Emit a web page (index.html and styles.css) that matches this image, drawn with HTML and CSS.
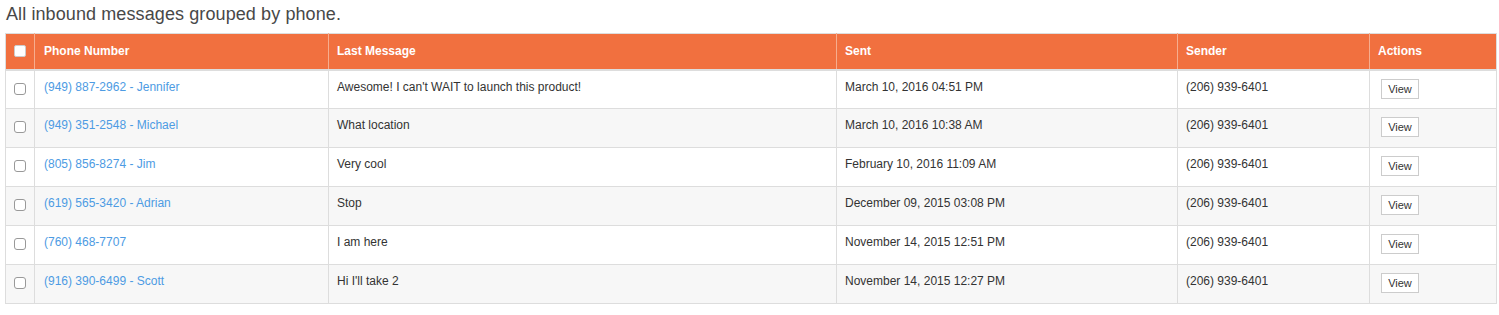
FILE: index.html
```html
<!DOCTYPE html>
<html>
<head>
<meta charset="utf-8">
<link rel="stylesheet" href="styles.css">
</head>
<body>
<p class="lead">All inbound messages grouped by phone.</p>
<table class="msg-table">
  <colgroup>
    <col class="c-check">
    <col class="c-phone">
    <col class="c-msg">
    <col class="c-sent">
    <col class="c-sender">
    <col class="c-actions">
  </colgroup>
  <thead>
    <tr>
      <th><input type="checkbox" class="cb cb-head"></th>
      <th>Phone Number</th>
      <th>Last Message</th>
      <th>Sent</th>
      <th>Sender</th>
      <th>Actions</th>
    </tr>
  </thead>
  <tbody>
    <tr>
      <td><input type="checkbox" class="cb"></td>
      <td><a href="#">(949) 887-2962 - Jennifer</a></td>
      <td>Awesome! I can't WAIT to launch this product!</td>
      <td>March 10, 2016 04:51 PM</td>
      <td>(206) 939-6401</td>
      <td><button class="btn">View</button></td>
    </tr>
    <tr>
      <td><input type="checkbox" class="cb"></td>
      <td><a href="#">(949) 351-2548 - Michael</a></td>
      <td>What location</td>
      <td>March 10, 2016 10:38 AM</td>
      <td>(206) 939-6401</td>
      <td><button class="btn">View</button></td>
    </tr>
    <tr>
      <td><input type="checkbox" class="cb"></td>
      <td><a href="#">(805) 856-8274 - Jim</a></td>
      <td>Very cool</td>
      <td>February 10, 2016 11:09 AM</td>
      <td>(206) 939-6401</td>
      <td><button class="btn">View</button></td>
    </tr>
    <tr>
      <td><input type="checkbox" class="cb"></td>
      <td><a href="#">(619) 565-3420 - Adrian</a></td>
      <td>Stop</td>
      <td>December 09, 2015 03:08 PM</td>
      <td>(206) 939-6401</td>
      <td><button class="btn">View</button></td>
    </tr>
    <tr>
      <td><input type="checkbox" class="cb"></td>
      <td><a href="#">(760) 468-7707</a></td>
      <td>I am here</td>
      <td>November 14, 2015 12:51 PM</td>
      <td>(206) 939-6401</td>
      <td><button class="btn">View</button></td>
    </tr>
    <tr>
      <td><input type="checkbox" class="cb"></td>
      <td><a href="#">(916) 390-6499 - Scott</a></td>
      <td>Hi I'll take 2</td>
      <td>November 14, 2015 12:27 PM</td>
      <td>(206) 939-6401</td>
      <td><button class="btn">View</button></td>
    </tr>
  </tbody>
</table>
</body>
</html>
```

FILE: styles.css
```css
html, body {
  margin: 0;
  padding: 0;
  background: #fff;
}
body {
  padding: 0 5px;
  font-family: "Liberation Sans", Arial, sans-serif;
  color: #333;
}
.lead {
  margin: 0;
  padding-top: 4px;
  height: 29px;
  font-size: 18px;
  line-height: 20px;
  color: #484848;
  padding-left: 1px;
  letter-spacing: 0.1px;
}
.msg-table {
  width: 1491px;
  table-layout: fixed;
  border-collapse: collapse;
  border: 1px solid #ddd;
  font-size: 12px;
}
.c-check { width: 29px; }
.c-phone { width: 294px; }
.c-msg { width: 508px; }
.c-sent { width: 341px; }
.c-sender { width: 192px; }
.c-actions { width: 127px; }

.msg-table thead th {
  background: #f1703f;
  color: #fff;
  font-weight: bold;
  text-align: left;
  height: 36px;
  padding: 0 8px;
  box-sizing: border-box;
  border-left: 1px solid #f6ad8e;
  border-bottom: 2px solid #ddd;
  vertical-align: middle;
  line-height: 17px;
}
.msg-table thead th:first-child {
  border-left: 1px solid #ddd;
}
.msg-table thead th:nth-child(2),
.msg-table tbody td:nth-child(2) {
  padding-left: 9px;
}
.msg-table tbody td {
  height: 39px;
  box-sizing: border-box;
  padding: 8px 8px 0;
  vertical-align: top;
  border: 1px solid #ddd;
  line-height: 17px;
  color: #333;
}
.msg-table tbody tr:nth-child(even) td {
  background: #f7f7f7;
}
.msg-table a {
  color: #4d9be3;
  text-decoration: none;
}
.cb {
  -webkit-appearance: none;
  appearance: none;
  display: block;
  width: 12px;
  height: 12px;
  margin: 4px 0 0 0;
  border: 1px solid #999;
  border-radius: 3px;
  background: #fff;
  box-sizing: border-box;
}
.cb-head {
  margin: 0;
  border-color: #ccc;
  border-radius: 2px;
}
.btn {
  display: block;
  margin: 0 0 0 3px;
  padding: 0;
  height: 20px;
  width: 38px;
  font-family: "Liberation Sans", Arial, sans-serif;
  font-size: 11px;
  color: #333;
  background: #fff;
  border: 1px solid #ccc;
  border-radius: 0;
  line-height: 18px;
  text-align: center;
}
```
